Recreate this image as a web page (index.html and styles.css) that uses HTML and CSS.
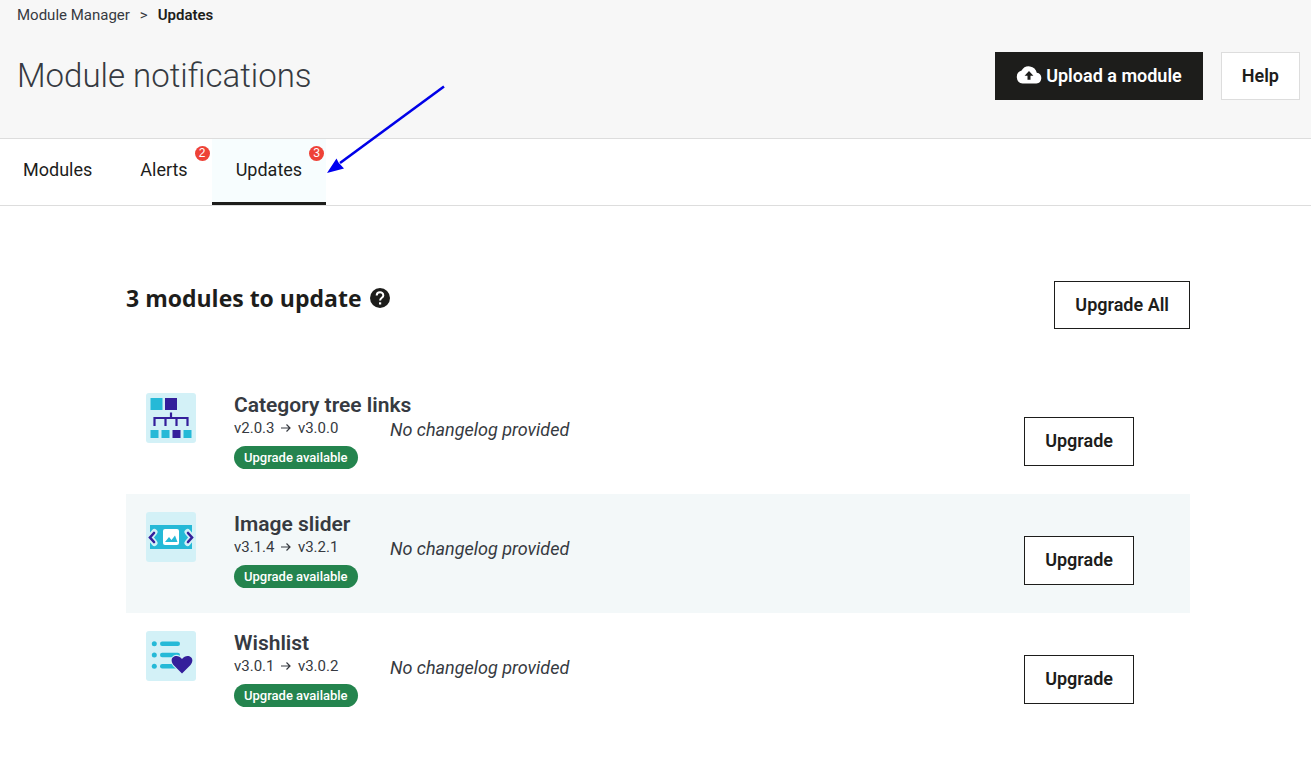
FILE: index.html
```html
<!DOCTYPE html>
<html lang="en">
<head>
<meta charset="utf-8">
<title>Module notifications</title>
<link rel="stylesheet" href="styles.css">
</head>
<body>
<header class="header">
  <nav class="breadcrumb" aria-label="Breadcrumb">
    <a href="#">Module Manager</a><span>&gt;</span><a href="#" class="current">Updates</a>
  </nav>
  <div class="title-row">
    <h1>Module notifications</h1>
    <div class="actions">
      <button class="btn btn-dark" type="button">
        <svg width="26" height="18" viewBox="0 0 26 18" aria-hidden="true"><path d="M20.8 6.8A8.2 8.2 0 0 0 5.6 4.6 6.6 6.6 0 0 0 6.6 17.5H20.4A5.4 5.4 0 0 0 20.8 6.8z" fill="#fff"/><path d="M13 5 8.6 9.8h2.9v4h3v-4h2.9z" fill="#1d1d1b"/></svg>
        <span>Upload a module</span>
      </button>
      <button class="btn btn-help" type="button">Help</button>
    </div>
  </div>
</header>
<nav class="tabs" aria-label="Module sections">
  <a href="#" class="tab">Modules</a>
  <a href="#" class="tab">Alerts<span class="count">2</span></a>
  <a href="#" class="tab active">Updates<span class="count">3</span></a>
</nav>
<svg class="pointer" width="120" height="90" viewBox="0 0 120 90" aria-hidden="true"><path d="M118 1.500 14 78" stroke="#0000e8" stroke-width="2.600"/><path d="M1 88 10.500 73.500 12.500 77.500 18 83.500z" fill="#0000f0"/></svg>
<main class="content">
  <div class="list-head">
    <h2>3 modules to update
      <svg width="20" height="20" viewBox="0 0 20 20" aria-hidden="true"><circle cx="10" cy="10" r="10" fill="#1d1d1b"/><path d="M6.700 7.600C6.700 3.300 13.300 3.300 13.300 7.400 13.300 9.800 10.100 9.800 10.100 12.400" fill="none" stroke="#fff" stroke-width="2"/><path d="M9 14.300h2.200v2.200H9z" fill="#fff"/></svg>
    </h2>
    <button class="btn" type="button">Upgrade All</button>
  </div>
  <section class="module">
    <svg class="logo" width="50" height="50" viewBox="0 0 50 50" aria-hidden="true"><rect width="50" height="50" rx="3" fill="#d3f1f7"/><path d="M4.500 5h12v12h-12zM4.500 37h8v8h-8zM15.500 37h8v8h-8zM37.500 37h8v8h-8z" fill="#25b9d7"/><path d="M19 5h12v12H19zM26.500 37h8v8h-8z" fill="#341f9b"/><path d="M25 19.500v5M8.500 33v-8h33v8M19.500 25v8M30.500 25v8" fill="none" stroke="#341f9b" stroke-width="2.200"/></svg>
    <div class="info">
      <h3>Category tree links</h3>
      <p class="version">v2.0.3 <svg width="12" height="10" viewBox="0 0 12 10" role="img" aria-label="to"><path d="M1 5h9M6.500 1.500 10 5 6.500 8.500"/></svg> v3.0.0</p>
      <span class="badge">Upgrade available</span>
    </div>
    <p class="changelog">No changelog provided</p>
    <button class="btn" type="button">Upgrade</button>
  </section>
  <section class="module">
    <svg class="logo" width="50" height="50" viewBox="0 0 50 50" aria-hidden="true"><rect width="50" height="50" rx="3" fill="#d3f1f7"/><path d="M4 13h42v24H4z" fill="#25b9d7"/><path d="M8.500 20 4 25.500l4.500 5.500M41.500 20l4.500 5.500-4.500 5.500" fill="none" stroke="#d3f1f7" stroke-width="6" stroke-linecap="round" stroke-linejoin="round"/><path d="M8 21 4 25.500 8 30M42 21l4 4.500-4 4.500" fill="none" stroke="#341f9b" stroke-width="2.600" stroke-linecap="round"/><rect x="17" y="17" width="16" height="16" rx="2" fill="#fff"/><path d="M19 30l4-5 2.500 3 3.500-4.500 2.500 6.500z" fill="#25b9d7"/></svg>
    <div class="info">
      <h3>Image slider</h3>
      <p class="version">v3.1.4 <svg width="12" height="10" viewBox="0 0 12 10" role="img" aria-label="to"><path d="M1 5h9M6.500 1.500 10 5 6.500 8.500"/></svg> v3.2.1</p>
      <span class="badge">Upgrade available</span>
    </div>
    <p class="changelog">No changelog provided</p>
    <button class="btn" type="button">Upgrade</button>
  </section>
  <section class="module">
    <svg class="logo" width="50" height="50" viewBox="0 0 50 50" aria-hidden="true"><rect width="50" height="50" rx="3" fill="#d3f1f7"/><g fill="#25b9d7"><circle cx="8.300" cy="12.700" r="2.500"/><circle cx="8.300" cy="24" r="2.500"/><circle cx="8.300" cy="35.300" r="2.500"/><rect x="14" y="10.500" width="20" height="4.400" rx="2.200"/><rect x="14" y="21.800" width="20" height="4.400" rx="2.200"/><rect x="14" y="33.100" width="20" height="4.400" rx="2.200"/></g><path d="M36 42.500 27.500 34C21.500 26 31.500 21.500 36 28c4.500-6.500 14.500-2 8.500 6z" fill="#341f9b" stroke="#d3f1f7" stroke-width="2" paint-order="stroke"/></svg>
    <div class="info">
      <h3>Wishlist</h3>
      <p class="version">v3.0.1 <svg width="12" height="10" viewBox="0 0 12 10" role="img" aria-label="to"><path d="M1 5h9M6.500 1.500 10 5 6.500 8.500"/></svg> v3.0.2</p>
      <span class="badge">Upgrade available</span>
    </div>
    <p class="changelog">No changelog provided</p>
    <button class="btn" type="button">Upgrade</button>
  </section>
</main>
</body>
</html>
```

FILE: styles.css
```css
* { box-sizing: border-box; }
body { margin: 0; background: #fff; color: #1d1d1b; font-family: Roboto, "Noto Sans", sans-serif; font-size: 18px; }
h1, h2, h3, p { margin: 0; }
a { color: inherit; text-decoration: none; }
.header { padding: 5px 11px 38px 17px; background: #f7f7f7; border-bottom: 1px solid #dddddd; }
.breadcrumb { display: flex; gap: 10px; font-size: 15px; line-height: 20px; color: #363a41; }
.breadcrumb .current { font-weight: 600; color: #1d1d1b; }
.title-row { display: flex; justify-content: space-between; align-items: center; padding-top: 27px; }
h1 { font-size: 33px; line-height: 44px; font-weight: 300; color: #363a41; }
.actions { display: flex; gap: 18px; }
.btn { display: flex; align-items: center; justify-content: center; gap: 4px; height: 48px; padding: 0 20px 2px; border: 1px solid #1d1d1b; border-radius: 0; background: #fff; color: #1d1d1b; font-family: inherit; font-size: 18px; font-weight: 600; white-space: nowrap; }
.btn-dark { background: #1d1d1b; color: #fff; }
.btn-help { border-color: #dddddd; }
.tabs { display: flex; height: 67px; border-bottom: 1px solid #dddddd; }
.tab { position: relative; padding: 19px 24px 0; line-height: 24px; }
.tab:first-child { padding-left: 23px; }
.tab.active { background: #f7fdfe; border-bottom: 3px solid #1d1d1b; }
.count { position: absolute; top: 7px; right: 2px; width: 15px; height: 15px; border-radius: 50%; background: #ee4237; color: #fff; font-family: "Liberation Sans", sans-serif; font-size: 12px; line-height: 15px; text-align: center; }
.pointer { position: absolute; left: 326px; top: 85px; }
.content { padding: 75px 121px 46px 126px; }
.list-head { display: flex; justify-content: space-between; align-items: flex-start; margin-bottom: 46px; }
h2 { display: flex; align-items: center; gap: 8px; font-family: "Open Sans", sans-serif; font-size: 23px; line-height: 34px; font-weight: 700; }
.module { display: grid; grid-template-columns: 88px 156px 1fr auto; height: 119px; padding: 18px 56px 0 20px; }
.module:nth-of-type(even) { background: #f3f8f9; }
.info { white-space: nowrap; }
h3 { font-size: 21px; line-height: 24px; font-weight: 600; color: #363a41; }
.version { font-size: 15px; line-height: 22px; color: #363a41; }
.version svg { margin: 0 2px; fill: none; stroke: #363a41; stroke-width: 1.200; }
.badge { display: inline-block; height: 23px; margin-top: 7px; padding: 0 10px; border-radius: 12px; background: #24844e; color: #fff; font-size: 13px; line-height: 23px; font-weight: 500; }
.changelog { padding-top: 25px; line-height: 24px; font-style: italic; font-weight: 400; color: #363a41; }
.module .btn { height: 49px; margin-top: 24px; }
```
